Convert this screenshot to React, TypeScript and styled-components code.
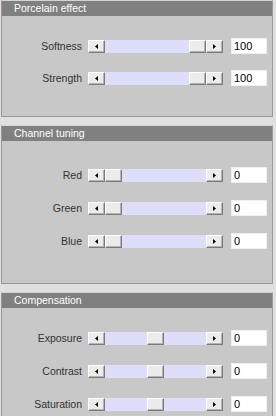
import React from 'react';
import styled, { createGlobalStyle } from 'styled-components';

const GlobalStyle = createGlobalStyle`
  html, body {
    margin: 0;
    padding: 0;
    background: #e0e0e0;
  }
  body {
    font-family: "Liberation Sans", Arial, sans-serif;
    font-size: 10.5px;
  }
`;

const Page = styled.div`
  width: 272px;
  padding-left: 1px;
  display: flex;
  flex-direction: column;
  gap: 8px;
`;

const Panel = styled.section`
  background: #c8c8c8;
  border: 1px solid #999999;
  border-top-color: #d4d4d4;
`;

const Header = styled.div`
  height: 15px;
  line-height: 15px;
  background: #808080;
  color: #ffffff;
  padding-left: 12px;
  font-size: 10.5px;
`;

const Body = styled.div<{ $top: number; $bottom: number; $gap: number }>`
  display: flex;
  flex-direction: column;
  gap: ${(p) => p.$gap}px;
  padding-top: ${(p) => p.$top}px;
  padding-bottom: ${(p) => p.$bottom}px;
`;

const Row = styled.div`
  display: flex;
  align-items: center;
  height: 16px;
`;

const Label = styled.div`
  width: 86px;
  text-align: right;
  color: #333333;
  padding-right: 6px;
  box-sizing: border-box;
  white-space: nowrap;
`;

const Slider = styled.div`
  display: flex;
  width: 135px;
  height: 13px;
`;

const bevel = `
  box-sizing: border-box;
  width: 17px;
  height: 13px;
  background: #ececec;
  border-top: 1px solid #ffffff;
  border-left: 1px solid #ffffff;
  border-right: 1px solid #7a7a7a;
  border-bottom: 1px solid #7a7a7a;
  box-shadow: inset -1px -1px 0 #b4b4b4;
`;

const ArrowButton = styled.div`
  ${bevel}
  flex: none;
  display: flex;
  align-items: center;
  justify-content: center;
`;

const Track = styled.div`
  position: relative;
  flex: 1;
  height: 13px;
  background: #dedefa;
`;

const Thumb = styled.div`
  ${bevel}
  position: absolute;
  top: 0;
`;

const Value = styled.div`
  box-sizing: border-box;
  width: 36px;
  height: 16px;
  margin-left: 8px;
  background: #ffffff;
  border: 1px solid #f0f0f0;
  color: #000000;
  padding-left: 2px;
  line-height: 14px;
  font-size: 11px;
`;

function Arrow({ dir }: { dir: 'left' | 'right' }) {
  return (
    <svg width="3" height="5" viewBox="0 0 3 5">
      {dir === 'left' ? (
        <polygon points="3,0 3,5 0,2.5" fill="#000" />
      ) : (
        <polygon points="0,0 0,5 3,2.5" fill="#000" />
      )}
    </svg>
  );
}

type Ctrl = { label: string; value: number; min: number; max: number };

function SliderRow({ label, value, min, max }: Ctrl) {
  const travel = 101 - 17;
  const left = Math.round(((value - min) / (max - min)) * travel);
  return (
    <Row>
      <Label>{label}</Label>
      <Slider>
        <ArrowButton>
          <Arrow dir="left" />
        </ArrowButton>
        <Track>
          <Thumb style={{ left }} />
        </Track>
        <ArrowButton>
          <Arrow dir="right" />
        </ArrowButton>
      </Slider>
      <Value>{value}</Value>
    </Row>
  );
}

const groups = [
  {
    title: 'Porcelain effect',
    top: 22,
    bottom: 30,
    gap: 16,
    rows: [
      { label: 'Softness', value: 100, min: 0, max: 100 },
      { label: 'Strength', value: 100, min: 0, max: 100 },
    ],
  },
  {
    title: 'Channel tuning',
    top: 26,
    bottom: 34,
    gap: 17,
    rows: [
      { label: 'Red', value: 0, min: 0, max: 100 },
      { label: 'Green', value: 0, min: 0, max: 100 },
      { label: 'Blue', value: 0, min: 0, max: 100 },
    ],
  },
  {
    title: 'Compensation',
    top: 22,
    bottom: 30,
    gap: 17,
    rows: [
      { label: 'Exposure', value: 0, min: -100, max: 100 },
      { label: 'Contrast', value: 0, min: -100, max: 100 },
      { label: 'Saturation', value: 0, min: -100, max: 100 },
    ],
  },
];

export default function App() {
  return (
    <>
      <GlobalStyle />
      <Page>
        {groups.map((g) => (
          <Panel key={g.title}>
            <Header>{g.title}</Header>
            <Body $top={g.top} $bottom={g.bottom} $gap={g.gap}>
              {g.rows.map((r) => (
                <SliderRow key={r.label} {...r} />
              ))}
            </Body>
          </Panel>
        ))}
      </Page>
    </>
  );
}
